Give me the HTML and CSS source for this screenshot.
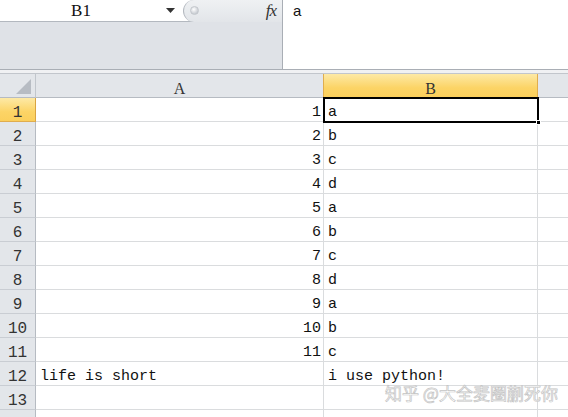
FILE: index.html
```html
<!DOCTYPE html>
<html>
<head>
<meta charset="utf-8">
<link rel="stylesheet" href="styles.css">
</head>
<body>
<div class="app">
  <div class="fbar">
    <div class="fleft">
      <div class="ftop">
        <div class="namebox">B1</div>
        <div class="ddarrow"><svg width="9" height="5" viewBox="0 0 9 5"><path d="M0 0H9L4.5 5Z" fill="#333"/></svg></div>
        <div class="bubble">
          <span class="knob"></span>
          <span class="fx">fx</span>
        </div>
      </div>
      <div class="fgray"></div>
    </div>
    <div class="finput">a</div>
  </div>
  <div class="gap"></div>
  <div class="sheet">
    <div class="grid">
      <div class="corner"><svg width="36" height="24" viewBox="0 0 36 24"><path d="M31 5V20H16Z" fill="#b7bcc3"/></svg></div>
      <div class="ch">A</div>
      <div class="ch sel">B</div>
      <div class="ch last"></div>

      <div class="rh sel">1</div><div class="c num">1</div><div class="c">a</div><div class="c e"></div>
      <div class="rh">2</div><div class="c num">2</div><div class="c">b</div><div class="c e"></div>
      <div class="rh">3</div><div class="c num">3</div><div class="c">c</div><div class="c e"></div>
      <div class="rh">4</div><div class="c num">4</div><div class="c">d</div><div class="c e"></div>
      <div class="rh">5</div><div class="c num">5</div><div class="c">a</div><div class="c e"></div>
      <div class="rh">6</div><div class="c num">6</div><div class="c">b</div><div class="c e"></div>
      <div class="rh">7</div><div class="c num">7</div><div class="c">c</div><div class="c e"></div>
      <div class="rh">8</div><div class="c num">8</div><div class="c">d</div><div class="c e"></div>
      <div class="rh">9</div><div class="c num">9</div><div class="c">a</div><div class="c e"></div>
      <div class="rh">10</div><div class="c num">10</div><div class="c">b</div><div class="c e"></div>
      <div class="rh">11</div><div class="c num">11</div><div class="c">c</div><div class="c e"></div>
      <div class="rh">12</div><div class="c">life is short</div><div class="c">i use python!</div><div class="c e"></div>
      <div class="rh">13</div><div class="c"></div><div class="c"></div><div class="c e"></div>
      <div class="rh"></div><div class="c"></div><div class="c"></div><div class="c e"></div>
    </div>
    <div class="selbox"><span class="handle"></span></div>
    <div class="watermark">知乎 @大全麦圈蒯死你</div>
  </div>
</div>
</body>
</html>
```

FILE: styles.css
```css
* { box-sizing: border-box; }
html, body { margin: 0; padding: 0; }
body {
  width: 568px;
  height: 417px;
  overflow: hidden;
  background: #fff;
  font-family: "Liberation Mono", monospace;
}
.app { width: 568px; }

.fbar {
  display: flex;
  height: 70px;
  border-bottom: 1px solid #a9aeb5;
}
.fleft {
  width: 283px;
  display: flex;
  flex-direction: column;
  border-right: 1px solid #a9aeb5;
}
.ftop {
  height: 22px;
  display: flex;
  align-items: center;
  background: #fff;
  border-bottom: 1px solid #b3b8bf;
}
.namebox {
  width: 162px;
  text-align: center;
  font-family: "Liberation Serif", serif;
  font-size: 17px;
  color: #111;
  line-height: 21px;
}
.ddarrow {
  width: 21px;
  display: flex;
  justify-content: flex-start;
  padding-left: 4px;
  align-items: center;
  height: 21px;
}
.bubble {
  flex: 1;
  height: 22px;
  display: flex;
  align-items: center;
  justify-content: space-between;
  background: linear-gradient(#eff1f3, #e2e5e9);
  border-left: 1px solid #b3b8bf;
  border-radius: 11px 0 0 11px;
  padding: 0 5px 0 6px;
}
.knob {
  width: 9px;
  height: 9px;
  border-radius: 50%;
  background: radial-gradient(circle at 40% 35%, #ffffff, #c9cdd3 70%);
  border: 1px solid #c3c7cc;
}
.fx {
  font-family: "Liberation Serif", serif;
  font-style: italic;
  font-size: 17px;
  color: #333;
  letter-spacing: -1px;
  padding-right: 1px;
}
.fgray {
  flex: 1;
  background: #dfe2e7;
}
.finput {
  flex: 1;
  font-family: "Liberation Sans", sans-serif;
  font-size: 15px;
  color: #111;
  padding: 2px 0 0 10px;
  line-height: 18px;
}
.gap {
  height: 4px;
  background: #f0f1f3;
  border-bottom: 1px solid #c2c6cc;
}

.sheet { position: relative; }
.grid {
  display: grid;
  grid-template-columns: 36px 288px 214px 30px;
  grid-auto-rows: 24px;
}
.corner {
  background: #e3e6ea;
  border-right: 1px solid #c1c6cc;
  border-bottom: 1px solid #b6bbc2;
}
.corner svg { display: block; }
.ch {
  background: #e3e6ea;
  border-right: 1px solid #c6cad0;
  border-bottom: 1px solid #b6bbc2;
  display: flex;
  align-items: center;
  justify-content: center;
  font-family: "Liberation Serif", serif;
  font-size: 16px;
  color: #333;
  padding-top: 6px;
}
.ch.sel {
  background: linear-gradient(#fde9a6, #fcd466 60%, #fbcf5c);
  border-right: 1px solid #e0ad4e;
  border-left: 1px solid #e0ad4e;
  border-bottom: 1px solid #d9a441;
  margin-left: -1px;
}
.ch.last { border-right: none; }
.rh {
  background: #e3e6ea;
  border-right: 1px solid #b6bbc2;
  border-bottom: 1px solid #c9cdd3;
  display: flex;
  align-items: center;
  justify-content: center;
  font-family: "Liberation Mono", monospace;
  font-size: 16px;
  color: #333;
  padding-top: 7px;
}
.rh.sel {
  background: linear-gradient(#fde9a6, #fcd466 60%, #fbcf5c);
  border-bottom: 1px solid #e0ad4e;
  border-right: 1px solid #d9a441;
}
.c {
  border-right: 1px solid #dadcde;
  border-bottom: 1px solid #dadcde;
  display: flex;
  align-items: flex-start;
  padding: 7px 2px 0 4px;
  font-size: 15px;
  line-height: 16px;
  color: #111;
  white-space: nowrap;
}
.c.num { justify-content: flex-end; }
.c.e { border-right: none; }

.selbox {
  position: absolute;
  left: 323px;
  top: 23px;
  width: 216px;
  height: 26px;
  border: 2px solid #000;
}
.handle {
  position: absolute;
  right: -4px;
  bottom: -4px;
  width: 5px;
  height: 5px;
  background: #000;
  border: 1px solid #fff;
}
.watermark {
  position: absolute;
  left: 385px;
  top: 306px;
  font-family: "Noto Sans CJK SC", sans-serif;
  font-size: 17px;
  color: rgba(255,255,255,0.85);
  -webkit-text-stroke: 0.7px #c4c4c4;
  white-space: nowrap;
}
```
